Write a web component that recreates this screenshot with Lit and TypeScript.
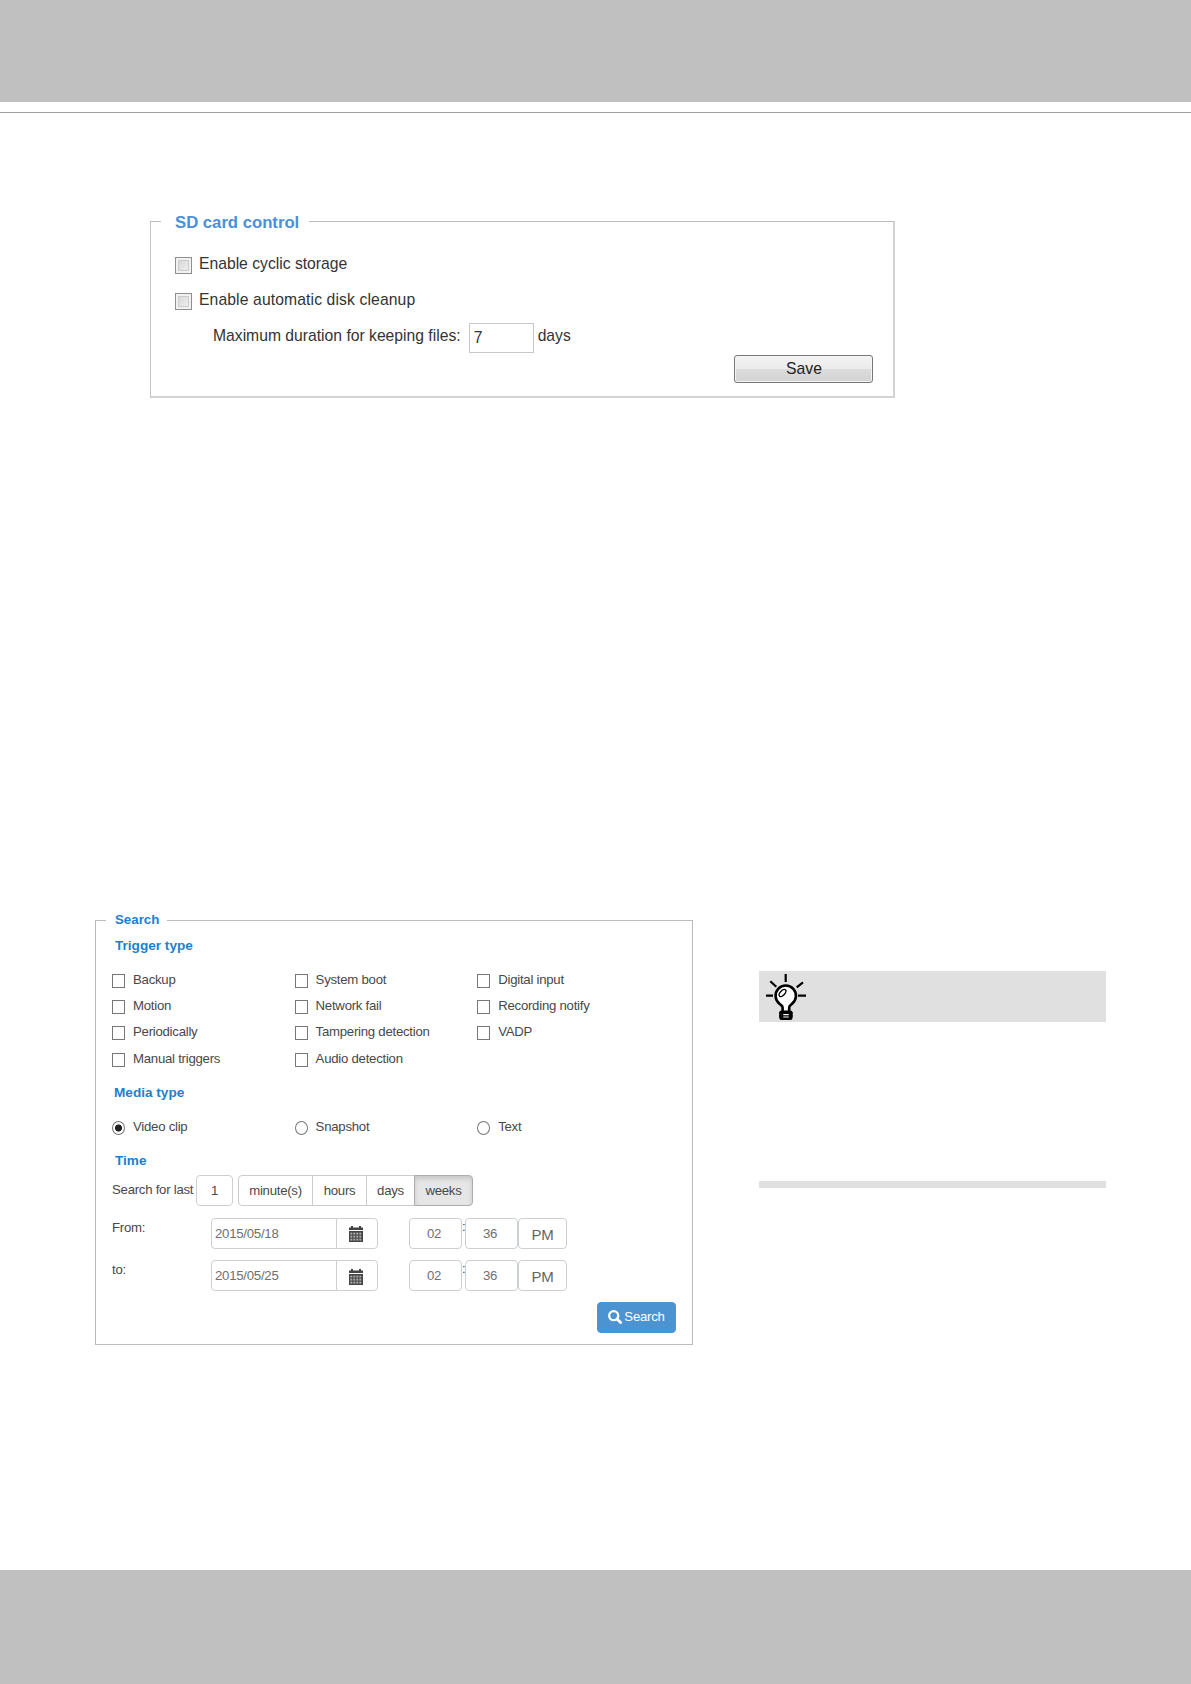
import {css, html, LitElement, svg} from 'lit';
import {customElement, state} from 'lit/decorators.js';

const triggers = [
	'Backup', 'System boot', 'Digital input',
	'Motion', 'Network fail', 'Recording notify',
	'Periodically', 'Tampering detection', 'VADP',
	'Manual triggers', 'Audio detection',
];
const mediaTypes = ['Video clip', 'Snapshot', 'Text'];
const units = ['minute(s)', 'hours', 'days', 'weeks'];

interface Moment {
	label: string,
	date: string,
	hour: string,
	minute: string,
	half: string,
}

const range: Moment[] = [
	{label: 'From:', date: '2015/05/18', hour: '02', minute: '36', half: 'PM'},
	{label: 'to:', date: '2015/05/25', hour: '02', minute: '36', half: 'PM'},
];

const calendarIcon = html`
	<svg width="14" height="16" viewBox="0 0 14 16">
		<path fill="#444" d="M0 1.5h2V0h2v1.5h6V0h2v1.5h2V4H0z"/>
		<path fill="#444" d="M0 5h14v11H0z"/>
		${[1.3, 4.3, 7.3, 10.3].map((x) => [6.6, 9.6, 12.6].map((y) => svg`
			<rect x=${x} y=${y} width="2" height="2" fill="#aaa"/>
		`))}
	</svg>
`;

const searchIcon = html`
	<svg width="14" height="14" viewBox="0 0 14 14" fill="none" stroke="#fff">
		<circle cx="5.7" cy="5.7" r="4.5" stroke-width="2.3"/>
		<path d="M9 9l3.6 3.6" stroke-width="2.8" stroke-linecap="round"/>
	</svg>
`;

const bulbIcon = html`
	<svg width="42" height="48" viewBox="0 0 42 48" fill="none" stroke="#000">
		<path stroke-width="2.2" d="M20.7 1v8M1 22.7h7M33 22.7h8M5.3 8.3l6 5.4M31.7 14.3l6.3-5"/>
		<path fill="#fff" stroke-width="2.6" d="M17.6 40v-5.500c0-1.700-1.500-2.200-3-3.600a10.200 10.200 0 1 1 12.300 0c-1.500 1.400-2.700 1.900-2.700 3.600v5.500"/>
		<ellipse cx="17.5" cy="20" rx="4.300" ry="2.300" stroke-width="1.300" transform="rotate(-48 17.5 20)"/>
		<rect x="15.500" y="38.800" width="10.800" height="7" rx="1" fill="#fff" stroke-width="2.600"/>
		<path stroke-width="1.400" d="M14 40.200h13.800M14 42.900h13.800"/>
		<path stroke-width="1.500" d="M17.500 38v8M24.500 38v8"/>
	</svg>
`;

@customElement('sd-card-control')
export class SDCardControl extends LitElement {
	protected render() {
		return html`
		<fieldset>
			<legend>SD card control</legend>
			<label class="row"><input type="checkbox">Enable cyclic storage</label>
			<label class="row cleanup"><input type="checkbox">Enable automatic disk cleanup</label>
			<div class="row duration">
				<span>Maximum duration for keeping files:</span>
				<input type="text" value="7">
				<span>days</span>
			</div>
			<button>Save</button>
		</fieldset>
		`;
	}

	static styles = css`
		:host {
			display: block;
			font: 15.7px/18px "Liberation Sans", Arial, sans-serif;
			color: #333;
		}

		fieldset {
			box-sizing: border-box;
			display: flow-root;
			width: 745px;
			height: 187px;
			margin: 0;
			padding: 15px 20px 0 24px;
			border: 1px solid #c8c8c8;
			border-width: 1px 2px 2px 1px;
			border-color: #bbb #d3d3d3 #d3d3d3 #c4c4c4;
		}

		legend {
			margin-left: -14px;
			padding: 4px 10px 0 14px;
			font-size: 16.7px;
			line-height: 16px;
			font-weight: bold;
			color: #4a90d9;
		}

		.row {
			display: flex;
			align-items: center;
			height: 36px;
		}
		.cleanup { letter-spacing: 0.12px; }
		.duration { padding-left: 38px; }

		input[type=checkbox] {
			appearance: none;
			box-sizing: border-box;
			width: 17px;
			height: 17px;
			margin: 3px 7px 0 0;
			border: 1px solid #8e8f8f;
			background: linear-gradient(135deg, #cfd0d2, #f6f6f6);
			box-shadow: inset 0 0 0 2px #f1f1f1, inset 0 0 0 3px #ccc;
		}

		input[type=text] {
			box-sizing: border-box;
			width: 65px;
			height: 30px;
			margin: 3px 4px 0 8px;
			padding: 1px 4px 0;
			border: 1px solid #c3c9cd;
			font: inherit;
			color: inherit;
			background: #fff;
		}

		button {
			display: block;
			box-sizing: border-box;
			width: 139px;
			height: 28px;
			margin: 1px 0 0 auto;
			padding: 0 0 0 1px;
			border: 1px solid #777;
			border-radius: 3px;
			background: linear-gradient(#f3f3f3, #ebebeb 50%, #dcdcdc 50%, #d3d3d3);
			box-shadow: inset 0 0 0 1px #f4f4f4;
			font: inherit;
			color: #222;
		}
	`;
}

@customElement('clip-search')
export class ClipSearch extends LitElement {
	@state()
	unit = 'weeks';

	protected render() {
		return html`
		<fieldset>
			<legend>Search</legend>
			<h3>Trigger type</h3>
			<div class="options">
				${triggers.map((name) => html`<label><input type="checkbox">${name}</label>`)}
			</div>
			<h3 class="media">Media type</h3>
			<div class="options">
				${mediaTypes.map((name, i) => html`
					<label><input type="radio" name="media" ?checked=${i === 0}>${name}</label>
				`)}
			</div>
			<h3>Time</h3>
			<div class="last">
				<span>Search for last</span>
				<input class="field count" value="1">
				<div class="units">
					${units.map((unit) => html`
						<button class=${unit === this.unit ? 'active' : ''} @click=${() => this.unit = unit}>${unit}</button>
					`)}
				</div>
			</div>
			${range.map((moment) => this.renderMoment(moment))}
			<button class="submit">${searchIcon}Search</button>
		</fieldset>
		`;
	}

	private renderMoment(moment: Moment) {
		return html`
			<div class="moment">
				<span class="name">${moment.label}</span>
				<input class="field date" .value=${moment.date}>
				<button class="picker">${calendarIcon}</button>
				<input class="field time" .value=${moment.hour}>
				<span class="colon">:</span>
				<input class="field time" .value=${moment.minute}>
				<button class="half">${moment.half}</button>
			</div>
		`;
	}

	static styles = css`
		:host {
			display: block;
			font: 13.2px/16px "Liberation Sans", Arial, sans-serif;
			letter-spacing: -0.25px;
			color: #484848;
		}

		fieldset {
			box-sizing: border-box;
			display: flow-root;
			width: 598px;
			height: 433px;
			margin: 0;
			padding: 8px 16px 0;
			border: 1px solid #bcbcbc;
		}

		legend {
			margin-left: -6px;
			padding: 1px 8px 1px 9px;
			font-size: 13.3px;
			line-height: 14px;
			font-weight: bold;
			letter-spacing: 0;
			color: #2080d0;
		}

		h3 {
			margin: 11px 0 11px 3px;
			font-size: 13.6px;
			line-height: 20px;
			letter-spacing: 0;
			color: #2080d0;
		}
		legend + h3 { margin: 0 0 11px 3px; }
		.media { margin-left: 2px; }

		.options {
			display: grid;
			grid-template-columns: repeat(3, 182.6px);
			grid-auto-rows: 26.2px;
		}

		label {
			display: flex;
			align-items: center;
		}

		button, .field {
			box-sizing: border-box;
			height: 31px;
			margin: 0;
			border: 1px solid #ccd0d2;
			border-radius: 4px;
			background: #fff;
			font: inherit;
			letter-spacing: inherit;
			color: inherit;
			text-align: center;
		}

		label input {
			appearance: none;
			box-sizing: border-box;
			width: 13px;
			height: 14px;
			margin: 2px 8px 0 0;
			border: 1px solid #777;
			background: #fff;
		}
		input[type=radio] { border-radius: 50%; }
		input[type=radio]:checked {
			background: radial-gradient(circle, #222 3.2px, #fff 3.9px);
		}

		.last {
			display: flex;
			line-height: 30px;
			margin-top: -6.5px;
		}
		.last span { width: 84px; }
		.count {
			width: 37px;
			margin-right: 5px;
			padding: 0;
		}

		.units {
			display: flex;

			button {
				width: 49px;
				margin-right: -1px;
				padding: 0 0 1px;
				border-color: #ccc;
				border-radius: 0;
			}
			button:first-child {
				width: 75px;
				border-radius: 4px 0 0 4px;
			}
			button:nth-child(2) { width: 55px; }
			button:last-child {
				width: 59px;
				border-radius: 0 4px 4px 0;
			}
			.active {
				border-color: #adadad;
				background: #e6e6e6;
				box-shadow: inset 0 3px 5px #0002;
			}
		}

		.moment {
			display: flex;
			margin-top: 11.5px;
		}
		.name {
			width: 99px;
			padding-top: 2px;
		}
		.date {
			width: 126px;
			padding: 0 3px;
			border-radius: 4px 0 0 4px;
			text-align: left;
			color: #707070;
		}
		.picker {
			display: flex;
			align-items: center;
			justify-content: center;
			width: 42px;
			margin: 0 31px 0 -1px;
			padding: 2px 2px 0 0;
			border-radius: 0 4px 4px 0;
		}
		.time {
			width: 53px;
			padding: 0 3px 0 0;
			color: #707070;
		}
		.colon {
			width: 3px;
			padding-top: 1px;
		}
		.half {
			width: 49px;
			padding: 3px 0 0;
			font-size: 15px;
			color: #666;
		}

		.submit {
			display: flex;
			align-items: center;
			justify-content: center;
			gap: 2px;
			width: 79px;
			margin: 11px 0 0 auto;
			padding: 0 0 2px;
			border: 1px solid #4b93d1;
			background: #4b93d1;
			color: #fff;
		}
	`;
}

@customElement('app-root')
export class AppRoot extends LitElement {
	protected render() {
		return html`
		<header></header>
		<hr>
		<main>
			<sd-card-control></sd-card-control>
			<div class="columns">
				<clip-search></clip-search>
				<aside>
					<div class="tip">${bulbIcon}</div>
					<div class="end"></div>
				</aside>
			</div>
		</main>
		<footer></footer>
		`;
	}

	static styles = css`
		:host {
			display: flex;
			flex-direction: column;
			height: 1684px;
			background: #fff;
		}

		header {
			height: 102px;
			background: #c0c0c0;
		}
		hr {
			width: 100%;
			height: 1px;
			margin: 10px 0 0;
			border: 0;
			background: #a0a0a0;
		}
		footer {
			height: 114px;
			background: #c0c0c0;
		}

		main {
			flex: 1;
			padding-top: 98px;
		}
		sd-card-control { margin-left: 150px; }

		.columns {
			display: flex;
			gap: 66px;
			margin: 514px 85px 0 95px;
		}
		aside {
			flex: 1;
			padding-top: 59px;
		}
		.tip {
			height: 51px;
			padding-left: 6px;
			background: #e0e0e0;

			svg {
				display: block;
				padding-top: 2px;
			}
		}
		.end {
			height: 7px;
			margin-top: 159px;
			background: #e0e0e0;
		}
	`;
}
